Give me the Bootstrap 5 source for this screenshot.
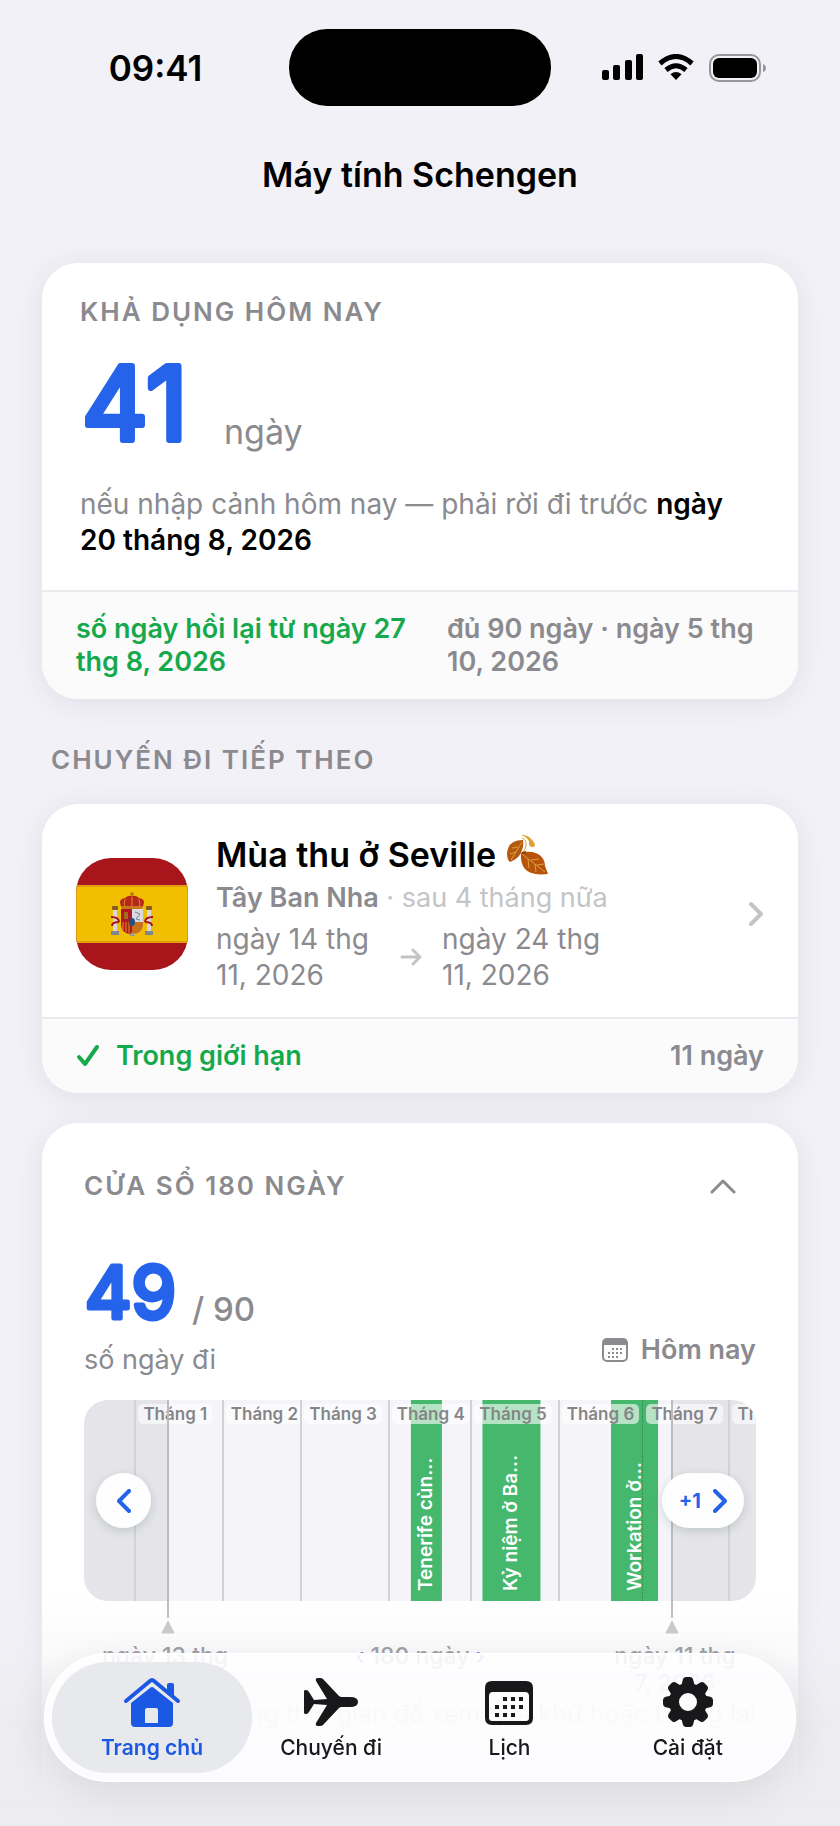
<!DOCTYPE html>
<html lang="vi">
  <head>
    <meta charset="UTF-8" />
    <meta name="viewport" content="width=device-width, initial-scale=1.0" />
    <title>Máy tính Schengen</title>
    <link
      href="https://cdn.jsdelivr.net/npm/bootstrap@5.3.2/dist/css/bootstrap.min.css"
      rel="stylesheet"
    />
    <style>
      :root {
        --blue: #2563eb;
        --green: #16a94c;
        --gray: #8a8a8f;
        --light: #c4c4c7;
      }
      body {
        background-color: #f2f1f7;
        color: #000;
        font-family: Inter, "Noto Sans", sans-serif;
        font-size: 28px;
        line-height: 36px;
      }
      a {
        text-decoration: none;
      }
      svg {
        display: block;
        flex-shrink: 0;
      }
      .text-blue {
        color: var(--blue);
      }
      .text-green {
        color: var(--green);
      }
      .text-gray {
        color: var(--gray);
      }
      .text-light-gray {
        color: var(--light);
      }

      /* Status bar */
      .status-bar {
        display: grid;
        grid-template-columns: 1fr auto 1fr;
        align-items: center;
        padding-top: 29px;
      }
      .status-side {
        display: flex;
        justify-content: center;
        align-items: center;
        gap: 15px;
      }
      .status-time {
        font-size: 35px;
        font-weight: 600;
        padding-left: 22px;
      }
      .status-icons {
        padding-right: 24px;
      }
      .island {
        width: 262px;
        height: 77px;
        border-radius: 38px;
        background-color: #000;
      }
      .page-title {
        margin: 48px 0 67px;
        font-size: 34px;
        font-weight: 600;
        line-height: 42px;
        text-align: center;
      }

      /* Cards */
      .page-main {
        padding: 0 42px;
      }
      .panel {
        border: 0;
        border-radius: 36px;
        overflow: hidden;
        color: #000;
        background-color: #fff;
      }
      .panel-wrap {
        border-radius: 36px;
        box-shadow: 0 4px 28px rgba(60, 60, 90, 0.09);
      }
      .panel-footer {
        border-top: 2px solid #ebebef;
        background-color: #fbfbfc;
        padding: 20px 34px 21px;
        font-size: 27px;
        font-weight: 600;
        line-height: 33px;
      }
      .overline {
        margin: 0;
        color: var(--gray);
        font-size: 26px;
        font-weight: 600;
        line-height: 30px;
        letter-spacing: 2px;
      }
      .number {
        overflow: visible;
        fill: var(--blue);
        stroke: var(--blue);
        stroke-linejoin: round;
        font-weight: 400;
      }
      .available {
        padding: 34px 38px 32px;
      }
      .available-count {
        gap: 26px;
        margin: 35px 0 34px;
        font-size: 34px;
        line-height: 40px;
      }
      .strong {
        font-weight: 600;
        color: #000;
      }
      .full-on {
        padding-left: 27px;
      }
      .section-label {
        margin: 46px 9px 29px;
      }

      /* Next trip */
      .trip {
        gap: 28px;
        padding: 30px 34px 24px;
        color: inherit;
      }
      .trip-name {
        margin: 0;
        gap: 10px;
        font-size: 34px;
        font-weight: 600;
        line-height: 42px;
      }
      .trip-country {
        margin: 5px 0 6px;
        font-size: 27px;
        line-height: 34px;
      }
      .trip-dates {
        gap: 20px;
      }
      .trip-dates span {
        width: 164px;
      }

      /* 180 day window */
      .window-panel {
        margin-top: 30px;
      }
      .window-body {
        padding: 48px 42px 90px;
      }
      .window-toggle {
        padding: 0 20px;
        border: 0;
      }
      .window-summary {
        margin: 62px 0 22px;
      }
      .window-count {
        gap: 11px;
        margin-bottom: 13px;
        font-size: 33px;
        font-weight: 500;
        line-height: 40px;
      }
      .day-label {
        font-size: 27px;
      }
      .today-btn {
        gap: 13px;
        margin-bottom: 11px;
        padding: 0;
        border: 0;
        color: var(--gray);
        font-size: 27px;
        font-weight: 600;
        line-height: 34px;
      }
      .timeline-box {
        position: relative;
        padding-bottom: 33px;
      }
      .timeline {
        position: relative;
        height: 201px;
        border-radius: 24px;
        overflow: hidden;
        background-color: #f4f4f9;
      }
      .timeline-layer {
        position: absolute;
        inset: 0;
      }
      .timeline-controls {
        padding: 0 12px 33px;
      }
      .months {
        display: flex;
      }
      .months div {
        flex: 0 0 auto;
      }
      .months div + div {
        border-left: 2px solid #d0d2d4;
        padding: 4px 0 0 2px;
      }
      .months .month-dotted {
        border-left: 1px dotted #34804e;
        padding-left: 3px;
      }
      .months span {
        display: inline-block;
        padding: 0 5px;
        border-radius: 5px;
        background-color: rgba(255, 255, 255, 0.6);
        color: #858588;
        font-size: 17px;
        font-weight: 600;
        line-height: 20px;
        white-space: nowrap;
        vertical-align: top;
      }
      .stay {
        position: absolute;
        top: 0;
        bottom: 0;
        display: flex;
        align-items: center;
        padding-top: 10px;
        background-color: #46b86d;
        color: #fff;
        font-size: 19px;
        font-weight: 600;
        line-height: 24px;
        white-space: nowrap;
        writing-mode: vertical-rl;
        transform: rotate(180deg);
      }
      .shade {
        position: absolute;
        top: 0;
        bottom: 0;
        width: 12.5%;
        background-color: rgba(0, 0, 0, 0.063);
      }
      .edge {
        position: absolute;
        top: 0;
        bottom: 0;
        display: flex;
        flex-direction: column;
        align-items: center;
        width: 14px;
        margin-left: -7px;
      }
      .edge::before {
        content: "";
        flex: 1;
        width: 2px;
        margin-bottom: 2px;
        background-color: #bcbcbf;
      }
      .shift-btn {
        display: flex;
        align-items: center;
        justify-content: center;
        gap: 12px;
        min-width: 55px;
        height: 55px;
        padding: 0 17px;
        border: 0;
        border-radius: 28px;
        background-color: rgba(255, 255, 255, 0.95);
        box-shadow: 0 3px 10px rgba(0, 60, 40, 0.16);
        color: var(--blue);
        font-size: 20px;
        font-weight: 700;
        line-height: 24px;
      }
      .range {
        margin: 9px 11px 0;
        color: var(--gray);
        font-size: 23px;
        font-weight: 500;
        line-height: 27px;
        text-align: center;
      }
      .range span {
        width: 140px;
      }
      .hint {
        gap: 12px;
        margin: 0;
        color: var(--gray);
        font-size: 25px;
        line-height: 34px;
        white-space: nowrap;
      }

      /* Tab bar */
      .bottom-fade {
        position: fixed;
        left: 0;
        right: 0;
        bottom: 0;
        height: 230px;
        background: linear-gradient(
          rgba(236, 236, 240, 0),
          rgba(236, 236, 240, 0.25) 25%,
          rgba(236, 236, 240, 0.75) 50%,
          rgba(236, 236, 240, 0.97)
        );
      }
      .tab-bar {
        position: fixed;
        left: 44px;
        right: 44px;
        bottom: 44px;
        height: 129px;
        padding: 7px 17px 7px 6px;
        border: 2px solid #fff;
        border-radius: 65px;
        background-color: rgba(254, 254, 255, 0.88);
        box-shadow: 0 12px 40px rgba(40, 40, 60, 0.1);
      }
      .tab-bar a {
        display: flex;
        flex: 1 1 0;
        flex-direction: column;
        align-items: center;
        justify-content: flex-end;
        gap: 7px;
        padding-bottom: 12px;
        border-radius: 56px;
        color: #18181a;
        font-size: 21px;
        font-weight: 500;
        line-height: 26px;
      }
      .tab-bar a.active {
        flex: 0 0 200px;
        margin-right: -10px;
        background-color: #e8e9ed;
        color: #1b58e3;
        font-weight: 600;
      }
    </style>
  </head>
  <body>
    <header>
      <div class="status-bar">
        <div class="status-side status-time">09:41</div>
        <div class="island"></div>
        <div class="status-side status-icons">
          <svg width="41" height="27" viewBox="0 0 41 27">
            <rect y="16" width="7" height="10" rx="2" />
            <rect x="11" y="11" width="7" height="15" rx="2" />
            <rect x="23" y="6" width="7" height="20" rx="2" />
            <rect x="34" y="0" width="7" height="26" rx="2" />
          </svg>
          <svg width="36" height="27" viewBox="0 0 36 27">
            <path d="M2 9.500Q18-4.500 34 9.500" fill="none" stroke="#000" stroke-width="5" />
            <path d="M8 16Q18 7.500 28 16" fill="none" stroke="#000" stroke-width="5" />
            <path d="M18 26l-5.500-5.800Q18 16 23.500 20.200z" />
          </svg>
          <svg width="57" height="28" viewBox="0 0 57 28">
            <rect x="1" y="1" width="50" height="26" rx="9" fill="none" stroke="#97979b" stroke-width="2" />
            <rect x="4" y="4" width="44" height="20" rx="6" />
            <path d="M54 10q3 1 3 4t-3 4z" fill="#97979b" />
          </svg>
        </div>
      </div>
      <h1 class="page-title">Máy tính Schengen</h1>
    </header>

    <main class="page-main">
      <section class="panel-wrap">
        <div class="card panel">
          <div class="available">
            <h2 class="overline">KHẢ DỤNG HÔM NAY</h2>
            <div class="available-count d-flex align-items-baseline text-gray">
              <svg class="number" width="118" height="82" viewBox="0 0 118 82" font-size="102" stroke-width="6">
                <text x="2" y="78">41</text>
              </svg>
              <span>ngày</span>
            </div>
            <p class="mb-0 text-gray">
              nếu nhập cảnh hôm nay — phải rời đi trước
              <span class="strong">ngày 20 tháng 8, 2026</span>
            </p>
          </div>
          <div class="panel-footer">
            <div class="row g-0">
              <div class="col-6 text-green">
                số ngày hồi lại từ ngày 27 thg 8, 2026
              </div>
              <div class="col-6 full-on text-gray">
                đủ 90 ngày · ngày 5 thg 10, 2026
              </div>
            </div>
          </div>
        </div>
      </section>

      <h2 class="overline section-label">CHUYẾN ĐI TIẾP THEO</h2>

      <section class="panel-wrap">
        <div class="card panel">
          <a href="#trip" class="trip d-flex align-items-center">
            <svg width="112" height="112" viewBox="0 0 112 112">
              <defs>
                <clipPath id="flagShape"><rect width="112" height="112" rx="35" /></clipPath>
              </defs>
              <g clip-path="url(#flagShape)">
                <rect width="112" height="112" fill="#a8151b" />
                <rect y="27" width="112" height="58" fill="#e0a010" />
                <rect x="1" y="29" width="110" height="54" fill="#f1bf00" />
                <!-- pillars -->
                <g fill="#d8d8dc">
                  <rect x="37" y="52" width="4" height="22" />
                  <rect x="71" y="52" width="4" height="22" />
                </g>
                <g fill="#8a5a20">
                  <rect x="36" y="48" width="6" height="4" rx="1" />
                  <rect x="70" y="48" width="6" height="4" rx="1" />
                </g>
                <g fill="#7f868f">
                  <rect x="35" y="73" width="8" height="4" />
                  <rect x="69" y="73" width="8" height="4" />
                </g>
                <path d="M35 59q8 0 8 5M43 64q-7 0-7 4M77 59q-8 0-8 5M69 64q7 0 7 4" fill="none" stroke="#a8151b" stroke-width="2" />
                <!-- crown -->
                <path d="M46 50q-5-9 3-10 3-3 7-2 4-1 7 2 8 1 3 10z" fill="#b5261c" />
                <path d="M49 49q-2-6 1-8M56 49v-10M63 49q2-6-1-8" fill="none" stroke="#d9921a" stroke-width="1" />
                <path d="M56 34v5M54 36h4" stroke="#a35a14" stroke-width="1" />
                <rect x="46" y="48" width="20" height="3" fill="#c7791a" />
                <!-- shield -->
                <path d="M45 51h11v25q-11 0-11-10z" fill="#b01820" />
                <path d="M56 51h11v15q0 10-11 10z" fill="#d9dadf" />
                <path d="M56 64h11v2q0 10-11 10z" fill="#c9701a" />
                <path d="M47 64v8M50 64v10M53 64v11" stroke="#dba018" stroke-width="1" />
                <path d="M48 54h4v7h-4z" fill="#a36a20" />
                <path d="M59 54l5 2-4 5 4 1" fill="none" stroke="#83808c" stroke-width="1" />
                <ellipse cx="56" cy="64" rx="3" ry="4" fill="#24507f" />
                <path d="M53 78l3-4 3 4z" fill="#9a9aa2" />
              </g>
            </svg>
            <div class="flex-grow-1">
              <h3 class="trip-name d-flex align-items-center">
                Mùa thu ở Seville
                <svg width="44" height="42" viewBox="0 0 44 42" role="img" aria-label="Lá rụng">
                  <path d="M15 1q7-1 12 6 4 5 0 6-5 0-4-6Q21 3 15 1z" fill="#dba136" />
                  <path d="M17 6Q2 6 1 19q0 7 3 9 8-3 11-9 3-6 2-13z" fill="#b45a10" />
                  <path d="M15 19q9-3 17 1 7 4 7 12l3 8q-17 2-23-5-5-6-4-16z" fill="#b8530c" />
                  <path d="M16 4q5 2 4 8-1 5-4 7M16 8L5 26M16 20l23 18M12 13l-6 1M10 18l-6 2M22 25l1 9M29 30l1 8M25 26l8-1M31 31l7-1" fill="none" stroke="#e0a03a" stroke-width="1" />
                  <path d="M16 19l4-1" stroke="#8b3d0a" stroke-width="2" />
                </svg>
              </h3>
              <p class="trip-country text-light-gray">
                <b class="fw-semibold text-gray">Tây Ban Nha</b> · sau 4 tháng nữa
              </p>
              <div class="trip-dates d-flex align-items-center text-gray">
                <span>ngày 14 thg 11, 2026</span>
                <svg width="22" height="18" viewBox="0 0 22 18" fill="none" stroke="#c4c4c7" stroke-width="3" stroke-linecap="round" stroke-linejoin="round">
                  <path d="M2 9h18M13 2l7 7-7 7" />
                </svg>
                <span>ngày 24 thg 11, 2026</span>
              </div>
            </div>
            <svg width="16" height="26" viewBox="0 0 16 26" fill="none" stroke="#c4c4c7" stroke-width="4" stroke-linecap="round" stroke-linejoin="round">
              <path d="M3 3l10 10L3 23" />
            </svg>
          </a>
          <div class="panel-footer d-flex align-items-center">
            <svg class="me-3" width="24" height="24" viewBox="0 0 24 24" fill="none" stroke="#16a94c" stroke-width="4" stroke-linecap="round" stroke-linejoin="round">
              <path d="M3 13l6 7L21 3" />
            </svg>
            <span class="text-green">Trong giới hạn</span>
            <span class="ms-auto text-gray">11 ngày</span>
          </div>
        </div>
      </section>

      <section class="panel-wrap window-panel">
        <div class="card panel">
          <div class="window-body">
            <div class="d-flex justify-content-between align-items-center">
              <h2 class="overline">CỬA SỔ 180 NGÀY</h2>
              <button type="button" class="btn window-toggle" aria-label="Thu gọn">
                <svg width="26" height="16" viewBox="0 0 26 16" fill="none" stroke="#8a8a8f" stroke-width="3" stroke-linecap="round" stroke-linejoin="round">
                  <path d="M2 14L13 3l11 11" />
                </svg>
              </button>
            </div>

            <div class="window-summary d-flex justify-content-between align-items-end text-gray">
              <div>
                <div class="window-count d-flex align-items-baseline">
                  <svg class="number" width="97" height="58" viewBox="0 0 97 58" font-size="72" stroke-width="5">
                    <text x="1" y="55">49</text>
                  </svg>
                  <span>/ 90</span>
                </div>
                <div class="day-label">số ngày đi</div>
              </div>
              <button type="button" class="btn today-btn d-flex align-items-center">
                <svg width="26" height="24" viewBox="0 0 26 24">
                  <rect x="1" y="1" width="24" height="22" rx="4" fill="none" stroke="#8a8a8f" stroke-width="2" />
                  <path d="M1 7V4q0-3 3-3h18q3 0 3 3v3z" fill="#8a8a8f" />
                  <path d="M10 11h12M6 15h16M6 19h12" stroke="#8a8a8f" stroke-width="2" stroke-dasharray="2 2" />
                </svg>
                Hôm nay
              </button>
            </div>

            <div class="timeline-box">
              <div class="timeline">
                <div class="stay" style="left: 48.7%; width: 4.6%">Tenerife cùn…</div>
                <div class="stay" style="left: 59.2%; width: 8.7%">Kỷ niệm ở Ba…</div>
                <div class="stay" style="left: 78.4%; width: 7%">Workation ở…</div>
                <div class="shade" style="left: 0"></div>
                <div class="shade" style="left: 87.5%"></div>
                <div class="timeline-layer months">
                  <div style="width: 7.5%"></div>
                  <div style="width: 13%"><span>Tháng 1</span></div>
                  <div style="width: 11.7%"><span>Tháng 2</span></div>
                  <div style="width: 13%"><span>Tháng 3</span></div>
                  <div style="width: 12.3%"><span>Tháng 4</span></div>
                  <div style="width: 13%"><span>Tháng 5</span></div>
                  <div style="width: 12.6%"><span>Tháng 6</span></div>
                  <div class="month-dotted" style="width: 12.8%"><span>Tháng 7</span></div>
                  <div style="width: 13%"><span>Tháng 8</span></div>
                </div>
              </div>
              <div class="edge" style="left: 12.5%">
                <svg width="14" height="14" viewBox="0 0 14 14"><path d="M7 1l6 12H1z" fill="#c4c4c7" stroke="#c4c4c7" stroke-linejoin="round" /></svg>
              </div>
              <div class="edge" style="left: 87.5%">
                <svg width="14" height="14" viewBox="0 0 14 14"><path d="M7 1l6 12H1z" fill="#c4c4c7" stroke="#c4c4c7" stroke-linejoin="round" /></svg>
              </div>
              <div class="timeline-layer timeline-controls d-flex justify-content-between align-items-center">
                <button type="button" class="shift-btn" aria-label="Trước">
                  <svg width="14" height="24" viewBox="0 0 14 24" fill="none" stroke="#2563eb" stroke-width="4" stroke-linecap="round" stroke-linejoin="round">
                    <path d="M12 2L2 12l10 10" />
                  </svg>
                </button>
                <button type="button" class="shift-btn">
                  +1
                  <svg width="14" height="24" viewBox="0 0 14 24" fill="none" stroke="#2563eb" stroke-width="4" stroke-linecap="round" stroke-linejoin="round">
                    <path d="M2 2l10 10L2 22" />
                  </svg>
                </button>
              </div>
            </div>

            <div class="range d-flex justify-content-between">
              <span>ngày 13 thg<br />1, 2026</span>
              <div><b class="text-blue fw-normal">‹</b> 180 ngày <b class="text-blue fw-normal">›</b></div>
              <span>ngày 11 thg<br />7, 2026</span>
            </div>
            <p class="hint d-flex align-items-center justify-content-end">
              <svg width="24" height="18" viewBox="0 0 24 18"><ellipse cx="12" cy="9" rx="11" ry="8" fill="#a6a6aa" /></svg>
              Kéo dòng thời gian để xem quá khứ hoặc tương lai
            </p>
          </div>
        </div>
      </section>
    </main>

    <div class="bottom-fade"></div>
    <nav class="tab-bar d-flex">
      <a href="#home" class="active" aria-current="page">
        <svg width="58" height="52" viewBox="0 0 58 52" fill="#1b58e3">
          <path d="M44 16V9q0-2 2-2h3q2 0 2 2v14z" />
          <path d="M3 25L27 5q2-2 4 0l24 20" fill="none" stroke="#1b58e3" stroke-width="4" stroke-linecap="round" stroke-linejoin="round" />
          <path fill-rule="evenodd" d="M8 27L27 12q2-2 4 0l19 15v20q0 4-4 4H12q-4 0-4-4zM24 32q-2 0-2 2v13h13V34q0-2-2-2z" />
        </svg>
        Trang chủ
      </a>
      <a href="#trips">
        <svg width="56" height="52" viewBox="0 0 56 52" fill="currentColor">
          <path d="M1 15q0-1 2-1 2 0 3 2l5 8 13-1L13 5q-1-3 2-3h2q2 0 3 1l16 17q1 1 3 1h8q8 0 8 5t-8 5h-8q-2 0-3 1L20 49q-1 1-3 1h-2q-3 0-2-3l11-18-13-1-5 8q-1 2-3 2-2 0-2-1z" />
        </svg>
        Chuyến đi
      </a>
      <a href="#calendar">
        <svg width="50" height="50" viewBox="0 0 50 50">
          <path fill="currentColor" fill-rule="evenodd" d="M8 3h34q7 0 7 7v30q0 7-7 7H8q-7 0-7-7V10q0-7 7-7zM9 14q-4 0-4 4v22q0 3 3 3h34q3 0 3-3V18q0-4-4-4z" />
          <path d="M19 21h20M11 29h28M11 37h20" stroke="currentColor" stroke-width="4" stroke-dasharray="4 4" />
        </svg>
        Lịch
      </a>
      <a href="#settings">
        <svg width="52" height="52" viewBox="-26 -26 52 52" fill="currentColor">
          <defs>
            <path id="tooth" d="M-7-15l2-8q1-2 3-2h4q2 0 3 2l2 8z" />
          </defs>
          <circle r="14" fill="none" stroke="currentColor" stroke-width="10" />
          <use href="#tooth" />
          <use href="#tooth" transform="rotate(45)" />
          <use href="#tooth" transform="rotate(90)" />
          <use href="#tooth" transform="rotate(135)" />
          <use href="#tooth" transform="rotate(180)" />
          <use href="#tooth" transform="rotate(225)" />
          <use href="#tooth" transform="rotate(270)" />
          <use href="#tooth" transform="rotate(315)" />
        </svg>
        Cài đặt
      </a>
    </nav>

    <script src="https://cdn.jsdelivr.net/npm/bootstrap@5.3.2/dist/js/bootstrap.bundle.min.js"></script>
  </body>
</html>
